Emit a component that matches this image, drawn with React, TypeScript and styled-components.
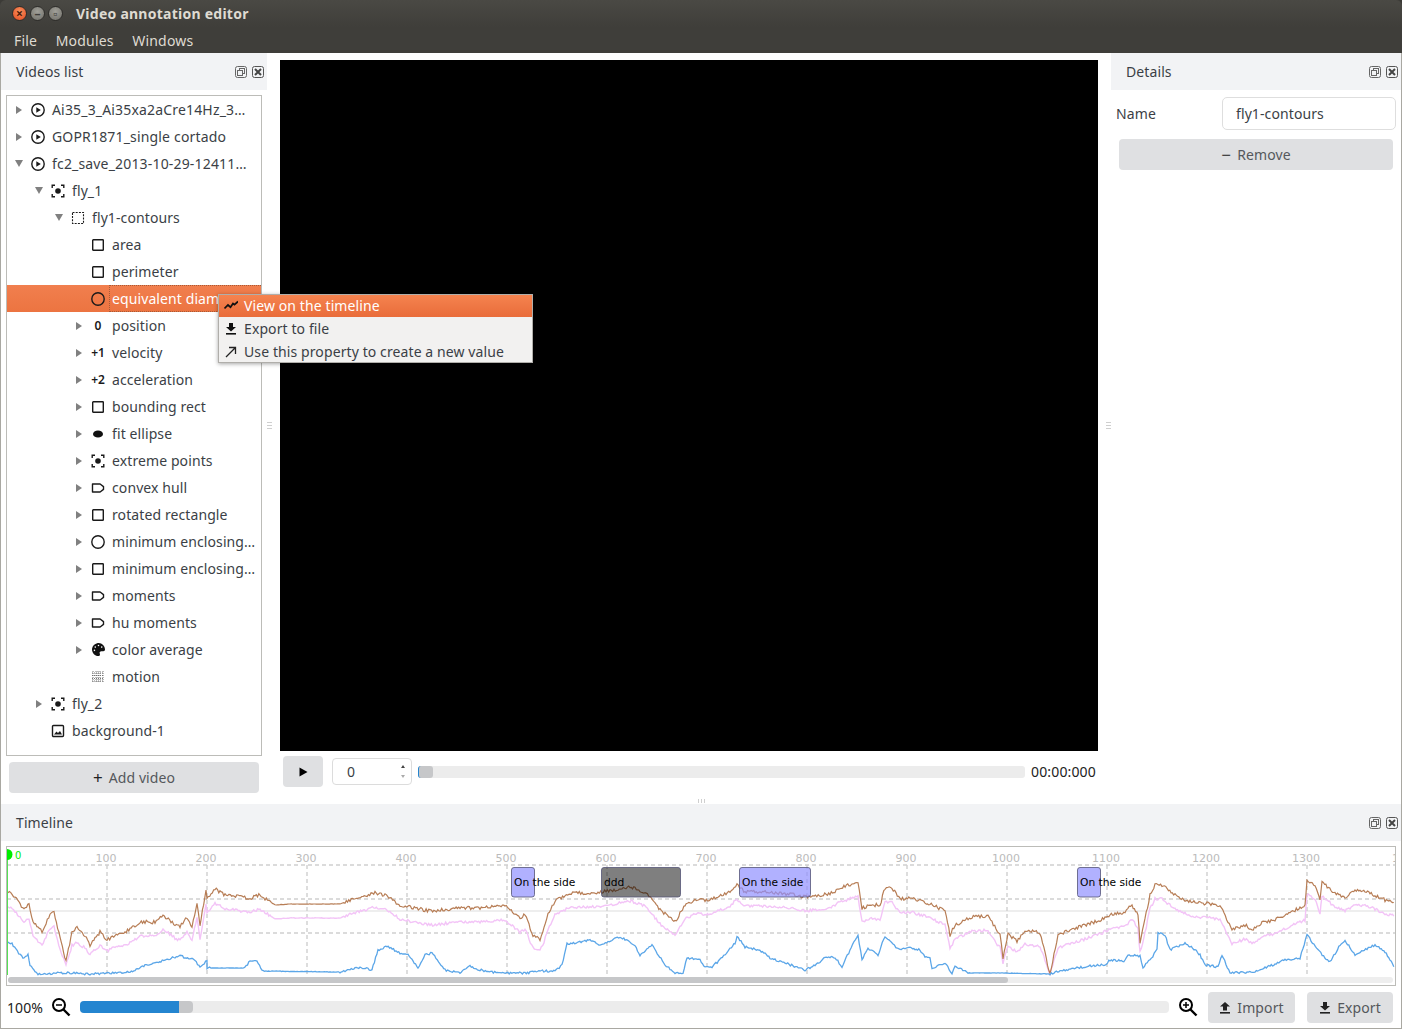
import React from 'react';
import styled, { createGlobalStyle } from 'styled-components';
import { FaPalette } from 'react-icons/fa';

type Kind =
  | 'video' | 'focus' | 'dashed' | 'square' | 'circle' | 'ellipse' | 'tag'
  | 'palette' | 'grid' | 'image' | 'n0' | 'n1' | 'n2';

type TreeRow = { label: string; level: number; kind: Kind; arrow?: 'open' | 'closed'; selected?: boolean };

const rows: TreeRow[] = [
  { label: 'Ai35_3_Ai35xa2aCre14Hz_3_Ai35xa2aCre14Hz_video', level: 0, kind: 'video', arrow: 'closed' },
  { label: 'GOPR1871_single cortado', level: 0, kind: 'video', arrow: 'closed' },
  { label: 'fc2_save_2013-10-29-124117-0000_video', level: 0, kind: 'video', arrow: 'open' },
  { label: 'fly_1', level: 1, kind: 'focus', arrow: 'open' },
  { label: 'fly1-contours', level: 2, kind: 'dashed', arrow: 'open' },
  { label: 'area', level: 3, kind: 'square' },
  { label: 'perimeter', level: 3, kind: 'square' },
  { label: 'equivalent diameter', level: 3, kind: 'circle', selected: true },
  { label: 'position', level: 3, kind: 'n0', arrow: 'closed' },
  { label: 'velocity', level: 3, kind: 'n1', arrow: 'closed' },
  { label: 'acceleration', level: 3, kind: 'n2', arrow: 'closed' },
  { label: 'bounding rect', level: 3, kind: 'square', arrow: 'closed' },
  { label: 'fit ellipse', level: 3, kind: 'ellipse', arrow: 'closed' },
  { label: 'extreme points', level: 3, kind: 'focus', arrow: 'closed' },
  { label: 'convex hull', level: 3, kind: 'tag', arrow: 'closed' },
  { label: 'rotated rectangle', level: 3, kind: 'square', arrow: 'closed' },
  { label: 'minimum enclosing circle', level: 3, kind: 'circle', arrow: 'closed' },
  { label: 'minimum enclosing triangle', level: 3, kind: 'square', arrow: 'closed' },
  { label: 'moments', level: 3, kind: 'tag', arrow: 'closed' },
  { label: 'hu moments', level: 3, kind: 'tag', arrow: 'closed' },
  { label: 'color average', level: 3, kind: 'palette', arrow: 'closed' },
  { label: 'motion', level: 3, kind: 'grid' },
  { label: 'fly_2', level: 1, kind: 'focus', arrow: 'closed' },
  { label: 'background-1', level: 1, kind: 'image' },
];

// keypoints of the traces, in page pixels
const brownPts = [
  [8,892],[15,897],[24,909],[29,904],[33,922],[42,932],[50,914],[54,912],[60,937],[66,962],[72,932],[77,928],[85,936],[90,945],[100,932],[107,940],[115,935],[125,932],[140,922],[155,922],[163,915],[175,924],[180,926],[187,918],[192,926],[197,904],[200,925],[206,890],[207,900],[215,889],[225,895],[250,898],[260,895],[275,905],[290,904],[340,904],[350,900],[375,893],[385,895],[400,905],[430,911],[460,908],[480,908],[505,906],[520,918],[525,915],[533,935],[540,940],[548,915],[555,901],[570,893],[590,893],[610,891],[630,887],[645,892],[660,910],[675,922],[685,905],[695,900],[710,900],[730,892],[737,885],[745,892],[760,892],[790,894],[805,897],[830,894],[840,888],[858,882],[862,908],[870,905],[880,905],[885,888],[892,888],[900,899],[910,898],[925,902],[930,904],[945,911],[950,935],[955,925],[972,917],[988,916],[1000,935],[1003,958],[1008,933],[1017,942],[1025,930],[1040,933],[1050,974],[1058,935],[1070,930],[1085,925],[1100,920],[1110,915],[1125,912],[1132,905],[1138,915],[1140,942],[1150,895],[1155,885],[1162,885],[1175,895],[1190,902],[1220,905],[1232,930],[1245,925],[1252,930],[1262,922],[1275,920],[1290,912],[1305,906],[1307,880],[1315,885],[1320,900],[1322,882],[1335,893],[1345,897],[1355,890],[1370,893],[1385,900],[1395,902],
];
const bluePts = [
  [8,942],[12,944],[20,955],[23,958],[28,955],[30,965],[35,972],[38,974],[60,973],[70,973],[90,974],[110,973],[130,972],[145,965],[165,960],[180,956],[195,960],[200,968],[207,960],[207,968],[245,968],[250,961],[257,961],[262,971],[340,972],[350,970],[360,967],[372,970],[378,950],[387,946],[400,953],[408,955],[418,968],[425,955],[432,953],[445,970],[460,973],[470,966],[480,970],[500,973],[525,973],[540,971],[555,971],[562,965],[567,944],[590,940],[600,945],[620,937],[635,945],[640,956],[652,945],[665,965],[675,973],[683,973],[687,958],[700,960],[705,967],[712,967],[725,955],[735,943],[737,936],[745,947],[760,950],[770,958],[785,963],[805,970],[815,965],[825,958],[835,957],[842,967],[850,950],[858,935],[862,960],[868,948],[878,955],[885,936],[893,945],[900,950],[910,948],[920,950],[925,957],[930,958],[932,968],[945,963],[952,973],[955,966],[968,973],[1000,973],[1050,974],[1060,971],[1090,966],[1105,965],[1110,960],[1125,961],[1128,955],[1140,956],[1143,967],[1150,960],[1157,950],[1158,933],[1165,935],[1170,950],[1185,943],[1195,950],[1200,955],[1205,965],[1218,967],[1222,955],[1230,973],[1255,972],[1270,966],[1285,960],[1300,958],[1307,935],[1318,950],[1325,958],[1330,962],[1340,945],[1345,940],[1355,955],[1375,945],[1385,952],[1395,968],
];

const noise = (x: number) => {
  const v = Math.sin(x * 12.9898) * 43758.5453;
  return (v - Math.floor(v)) * 2 - 1;
};

const resample = (pts: number[][], amp: number, quiet: number[][], map: (y: number) => number = (y) => y) => {
  const out: string[] = [];
  for (let i = 0; i < pts.length - 1; i++) {
    const [x0, y0] = pts[i];
    const [x1, y1] = pts[i + 1];
    const steps = Math.max(1, Math.round((x1 - x0) / 1.3));
    for (let s = 0; s < steps; s++) {
      const x = x0 + ((x1 - x0) * s) / steps;
      const y = y0 + ((y1 - y0) * s) / steps;
      const calm = quiet.some(([a, b]) => x > a && x < b);
      const j = noise(x + amp) * (calm ? 0.25 : amp);
      out.push(`${x.toFixed(1)},${Math.min(975, map(y) + j).toFixed(1)}`);
    }
  }
  return out.join(' ');
};

const pinkOffset = (y: number) => y + (y < 930 ? 14 : (14 * (974 - y)) / 44);

const brownLine = resample(brownPts, 1.7, [[270, 345]]);
const pinkLine = resample(brownPts, 1.4, [[270, 345]], pinkOffset);
const blueLine = resample(bluePts, 1.1, [[210, 245], [265, 340], [968, 1050]]);

const events = [
  { x: 511, w: 23, label: 'On the side', fill: '#9090ff', alpha: 0.7 },
  { x: 601, w: 79, label: 'ddd', fill: '#000000', alpha: 0.5 },
  { x: 739, w: 71, label: 'On the side', fill: '#9090ff', alpha: 0.7 },
  { x: 1077, w: 23, label: 'On the side', fill: '#9090ff', alpha: 0.7 },
];

function TreeIcon({ kind }: { kind: Kind }) {
  if (kind === 'n0') return <Glyph>0</Glyph>;
  if (kind === 'n1') return <Glyph>+1</Glyph>;
  if (kind === 'n2') return <Glyph>+2</Glyph>;
  if (kind === 'palette') return <FaPalette size={13} color="#111" />;
  return (
    <svg width="14" height="14" viewBox="0 0 14 14" fill="none" stroke="#1a1a1a" strokeWidth="1.4">
      {kind === 'video' && (
        <>
          <circle cx="7" cy="7" r="6.2" />
          <path d="M5.3 4.2 9.8 7l-4.5 2.8z" fill="#1a1a1a" stroke="none" />
        </>
      )}
      {kind === 'focus' && (
        <>
          <path d="M1.2 4V1.2H4M10 1.2h2.8V4M1.2 10v2.8H4M10 12.8h2.8V10" />
          <circle cx="7" cy="7" r="2.8" fill="#1a1a1a" stroke="none" />
        </>
      )}
      {kind === 'dashed' && <rect x="1.5" y="1.5" width="11" height="11" strokeWidth="1.1" strokeDasharray="2 1.2" />}
      {kind === 'square' && <rect x="1.7" y="1.7" width="10.6" height="10.6" rx="0.6" />}
      {kind === 'circle' && <circle cx="7" cy="7" r="6.2" />}
      {kind === 'ellipse' && <ellipse cx="7" cy="7" rx="5" ry="3.6" fill="#111" stroke="none" />}
      {kind === 'tag' && <path d="M1.5 3h7.6l3.4 2.6v2.8L9.1 11H1.5z" strokeLinejoin="round" />}
      {kind === 'grid' && (
        <g stroke="#666" strokeWidth="0.9" strokeDasharray="1 1">
          <path d="M2 1v12M5 1v12M7 1v12M9 1v12M12 1v12" />
          <path d="M1 3h12M1 5.5h12M1 8.5h12M1 11h12" />
        </g>
      )}
      {kind === 'image' && (
        <>
          <rect x="1.5" y="1.5" width="11" height="11" rx="1" />
          <path d="M3 10.5 5.5 7.5 7 9l2-2 2 3.5z" fill="#1a1a1a" stroke="none" />
        </>
      )}
    </svg>
  );
}

const FloatIcon = () => (
  <svg width="12" height="12" viewBox="0 0 12 12" fill="none" stroke="#666" strokeWidth="1">
    <rect x="0.5" y="0.5" width="11" height="11" rx="2" />
    <rect x="4.5" y="2.5" width="5" height="5" />
    <rect x="2.5" y="4.5" width="5" height="5" fill="#f2f3f5" />
  </svg>
);

const CloseIcon = () => (
  <svg width="12" height="12" viewBox="0 0 12 12" fill="none" stroke="#555">
    <rect x="0.5" y="0.5" width="11" height="11" rx="2" />
    <path d="M3 3l6 6M9 3l-6 6" strokeWidth="2" stroke="#444" />
  </svg>
);

const DownloadIcon = ({ color = '#222' }: { color?: string }) => (
  <svg width="12" height="13" viewBox="0 0 12 13" fill={color}>
    <path d="M4 1h4v4h3L6 9.5 1 5h3z" />
    <rect x="1" y="11" width="10" height="1.6" />
  </svg>
);

const UploadIcon = () => (
  <svg width="12" height="13" viewBox="0 0 12 13" fill="#222">
    <path d="M4 9.5h4v-4h3L6 1 1 5.5h3z" />
    <rect x="1" y="11" width="10" height="1.6" />
  </svg>
);

const ZoomIcon = ({ plus }: { plus?: boolean }) => (
  <svg width="20" height="20" viewBox="0 0 20 20" fill="none" stroke="#000" strokeWidth="2">
    <circle cx="8" cy="8" r="6" />
    <path d="M12.5 12.5 18.5 18.5" strokeWidth="2.4" />
    <path d="M5 8h6" strokeWidth="1.5" />
    {plus && <path d="M8 5v6" strokeWidth="1.5" />}
  </svg>
);

function DockHeader({ title }: { title: string }) {
  return (
    <Header>
      <span>{title}</span>
      <HeaderTools>
        <FloatIcon />
        <CloseIcon />
      </HeaderTools>
    </Header>
  );
}

function Chart() {
  const ticks = Array.from({ length: 14 }, (_, i) => i + 1);
  return (
    <ChartSvg viewBox="7 847 1388 130">
      {ticks.map((t) => (
        <PlotLabel key={t} x={7 + t * 100 - 1} y={862} textAnchor="middle">
          {t * 100}
        </PlotLabel>
      ))}
      <line x1="7" x2="1395" y1="911" y2="911" stroke="#eeeeee" strokeWidth="2" />
      <g stroke="#cfcfcf" strokeWidth="1.4" strokeDasharray="4 3">
        {[865, 899, 933].map((y) => (
          <line key={y} x1="7" x2="1395" y1={y} y2={y} />
        ))}
        {ticks.slice(0, 13).map((t) => (
          <line key={t} x1={7 + t * 100} x2={7 + t * 100} y1="865" y2="975" />
        ))}
      </g>
      <polyline points={pinkLine} fill="none" stroke="#f3c4f7" strokeWidth="1.4" />
      <polyline points={brownLine} fill="none" stroke="#b77d55" strokeWidth="1.2" />
      <polyline points={blueLine} fill="none" stroke="#5ba6e8" strokeWidth="1.3" />
      {events.map((e) => (
        <g key={e.x}>
          <rect x={e.x + 0.5} y="867.5" width={e.w} height="29.5" rx="2.5" fill={e.fill} fillOpacity={e.alpha} stroke="#555577" strokeOpacity="0.8" />
          <EventLabel x={e.x + 3} y="886">{e.label}</EventLabel>
        </g>
      ))}
      <line x1="7.5" x2="7.5" y1="850" y2="975" stroke="#55e055" strokeWidth="1" />
      <path d="M7 849a5.5 5.5 0 0 1 0 11z" fill="#00ee00" />
      <ZeroLabel x="15" y="859">0</ZeroLabel>
    </ChartSvg>
  );
}

export default function App() {
  return (
    <Page>
      <GlobalStyle />
      <TitleBar>
        <WindowButtons>
          <WindowButton $kind="close">×</WindowButton>
          <WindowButton $kind="other">–</WindowButton>
          <WindowButton $kind="other">▫</WindowButton>
        </WindowButtons>
        <WindowTitle>Video annotation editor</WindowTitle>
      </TitleBar>
      <MenuBar>
        <MenuEntry>File</MenuEntry>
        <MenuEntry>Modules</MenuEntry>
        <MenuEntry>Windows</MenuEntry>
      </MenuBar>
      <Content>
        <Workspace>
          <LeftDock>
            <DockHeader title="Videos list" />
            <Tree>
              {rows.map((row) => (
                <Row key={row.label} $level={row.level} $selected={row.selected}>
                  <Arrow $state={row.arrow} />
                  <IconSlot>
                    <TreeIcon kind={row.kind} />
                  </IconSlot>
                  <RowLabel $selected={row.selected} $wide={row.level === 0}>{row.label}</RowLabel>
                </Row>
              ))}
            </Tree>
            <WideButton $inset={8}>
              <ButtonGlyph>+</ButtonGlyph> Add video
            </WideButton>
            <ContextMenu>
              <MenuItem $active>
                <MenuIcon>
                  <svg width="14" height="12" viewBox="0 0 14 12" fill="none" stroke="#111" strokeWidth="1.7">
                    <path d="M0.5 9.5 4 6l2.5 2.2L9 4.5l1.5 1.2L14 2.5" />
                  </svg>
                </MenuIcon>
                View on the timeline
              </MenuItem>
              <MenuItem>
                <MenuIcon>
                  <DownloadIcon color="#111" />
                </MenuIcon>
                Export to file
              </MenuItem>
              <MenuItem>
                <MenuIcon>
                  <svg width="12" height="12" viewBox="0 0 12 12" fill="none" stroke="#222" strokeWidth="1.3">
                    <path d="M1 11 10.5 1.5M4 1.5h6.5V8" />
                  </svg>
                </MenuIcon>
                Use this property to create a new value
              </MenuItem>
            </ContextMenu>
          </LeftDock>
          <VSplit $side="flex-start">
            <Grip />
          </VSplit>
          <Player>
            <Video />
            <Controls>
              <PlayButton>
                <svg width="9" height="10" viewBox="0 0 9 10" fill="#000">
                  <path d="M0.5 0.5 8.5 5l-8 4.5z" />
                </svg>
              </PlayButton>
              <Spinner>
                0
                <SpinArrows>
                  <SpinArrow $up />
                  <SpinArrow />
                </SpinArrows>
              </Spinner>
              <SeekTrack>
                <SeekThumb />
              </SeekTrack>
              <TimeText>00:00:000</TimeText>
            </Controls>
          </Player>
          <VSplit $side="flex-end">
            <Grip />
          </VSplit>
          <RightDock>
            <DockHeader title="Details" />
            <NameRow>
              <NameLabel>Name</NameLabel>
              <NameInput>fly1-contours</NameInput>
            </NameRow>
            <RemoveButton>
              <ButtonGlyph>−</ButtonGlyph> Remove
            </RemoveButton>
          </RightDock>
        </Workspace>
        <HSplit>
          <HGrip />
        </HSplit>
        <Timeline>
          <DockHeader title="Timeline" />
          <ChartBox>
            <Chart />
            <ScrollTrack>
              <ScrollThumb />
            </ScrollTrack>
          </ChartBox>
          <Footer>
            <ZoomText>100%</ZoomText>
            <ZoomIcon />
            <ZoomTrack>
              <ZoomFill />
              <ZoomThumb />
            </ZoomTrack>
            <ZoomIcon plus />
            <FooterButton $width={87} $gap={10}>
              <UploadIcon /> Import
            </FooterButton>
            <FooterButton $width={86} $gap={12}>
              <DownloadIcon /> Export
            </FooterButton>
          </Footer>
        </Timeline>
      </Content>
    </Page>
  );
}

const GlobalStyle = createGlobalStyle`
  html, body { margin: 0; padding: 0; background: #fff; }
  * { box-sizing: border-box; }
`;

const Page = styled.div`
  width: 1402px;
  height: 1029px;
  display: flex;
  flex-direction: column;
  overflow: hidden;
  background: #3c3b37;
  color: #3b3f46;
  font-family: 'Noto Sans', 'Open Sans', sans-serif;
  font-size: 14px;
  letter-spacing: 0.1px;
`;

const TitleBar = styled.div`
  height: 27px;
  flex: none;
  display: flex;
  align-items: center;
  padding-left: 12px;
  background: linear-gradient(#4a4944, #3f3e3a);
  border-radius: 6px 6px 0 0;
`;

const WindowButtons = styled.div`
  display: flex;
  gap: 3px;
  width: 64px;
`;

const WindowButton = styled.div<{ $kind: 'close' | 'other' }>`
  width: 15px;
  height: 15px;
  border-radius: 50%;
  display: flex;
  align-items: center;
  justify-content: center;
  font-size: 12px;
  font-weight: 700;
  line-height: 1;
  letter-spacing: 0;
  color: ${(p) => (p.$kind === 'close' ? '#4a1c0a' : '#3f3e3a')};
  border: 1px solid #2e2d2a;
  background: ${(p) =>
    p.$kind === 'close'
      ? 'radial-gradient(circle at 50% 35%, #f8925f, #e4491f)'
      : 'radial-gradient(circle at 50% 35%, #a09f98, #706f69)'};
`;

const WindowTitle = styled.div`
  color: #dfdbd2;
  font-weight: 700;
  font-size: 14px;
  letter-spacing: 0.25px;
`;

const MenuBar = styled.div`
  height: 26px;
  flex: none;
  display: flex;
  align-items: center;
  gap: 18.5px;
  padding: 0 0 0 14px;
  background: #3f3e3a;
`;

const MenuEntry = styled.div`
  color: #dfdbd2;
  letter-spacing: 0.2px;
`;

const Content = styled.div`
  flex: 1;
  display: flex;
  flex-direction: column;
  background: #fff;
  border: 1px solid #a9a8a2;
  border-top: none;
`;

const Workspace = styled.div`
  height: 744px;
  flex: none;
  display: flex;
`;

const LeftDock = styled.div`
  position: relative;
  width: 266px;
  flex: none;
  display: flex;
  flex-direction: column;
`;

const Header = styled.div`
  height: 37px;
  flex: none;
  display: flex;
  align-items: center;
  justify-content: space-between;
  padding: 0 3px 0 15px;
  background: #f2f3f5;
`;

const HeaderTools = styled.div`
  display: flex;
  gap: 5px;
`;

const Tree = styled.div`
  margin: 5px 5px 0 5px;
  height: 661px;
  flex: none;
  border: 1px solid #bcbcb8;
  background: #fff;
  overflow: hidden;
`;

const Row = styled.div<{ $level: number; $selected?: boolean }>`
  height: 27px;
  display: flex;
  align-items: center;
  padding-left: ${(p) => 6 + p.$level * 20}px;
  background: ${(p) => (p.$selected ? 'linear-gradient(#f17f4e, #ec7441)' : 'transparent')};
  color: ${(p) => (p.$selected ? '#fff' : 'inherit')};
`;

const Arrow = styled.span<{ $state?: 'open' | 'closed' }>`
  width: 12px;
  flex: none;
  display: flex;
  justify-content: center;
  &::before {
    content: '';
    display: ${(p) => (p.$state ? 'block' : 'none')};
    border-style: solid;
    border-color: transparent;
    ${(p) =>
      p.$state === 'open'
        ? 'border-width: 7px 4px 0 4px; border-top-color: #808080;'
        : 'border-width: 4px 0 4px 6px; border-left-color: #808080;'}
  }
`;

const IconSlot = styled.span`
  width: 16px;
  margin-left: 5px;
  flex: none;
  display: flex;
  align-items: center;
  justify-content: center;
`;

const Glyph = styled.span`
  font-size: 12px;
  font-weight: 600;
  letter-spacing: 0;
  color: #1a1a1a;
  white-space: nowrap;
`;

const RowLabel = styled.span<{ $selected?: boolean; $wide?: boolean }>`
  flex: 1;
  min-width: 0;
  margin-left: 3px;
  padding: 0 ${(p) => (p.$wide ? 10 : 4)}px 0 2px;
  line-height: 25px;
  letter-spacing: ${(p) => (p.$wide ? 0.17 : 0.1)}px;
  white-space: nowrap;
  overflow: hidden;
  text-overflow: ellipsis;
  border: 1px dotted ${(p) => (p.$selected ? '#a85a36' : 'transparent')};
  border-width: 1px 0 1px 1px;
`;

const WideButton = styled.div<{ $inset: number }>`
  height: 31px;
  margin: 6px ${(p) => p.$inset}px 0 ${(p) => p.$inset}px;
  flex: none;
  display: flex;
  align-items: center;
  justify-content: center;
  gap: 6px;
  border-radius: 4px;
  background: #dfe0e2;
  color: #55585c;
`;

const ButtonGlyph = styled.span`
  color: #222;
  font-size: 17px;
  line-height: 1;
`;

const ContextMenu = styled.div`
  position: absolute;
  left: 217px;
  top: 241px;
  width: 315px;
  height: 69px;
  display: flex;
  flex-direction: column;
  background: #f2f1f0;
  border: 1px solid #b0aeaa;
  box-shadow: 0 1px 4px rgba(0, 0, 0, 0.35);
  z-index: 5;
`;

const MenuItem = styled.div<{ $active?: boolean }>`
  height: ${(p) => (p.$active ? 22 : 23)}px;
  flex: none;
  display: flex;
  align-items: center;
  padding-left: 4px;
  padding-bottom: ${(p) => (p.$active ? 2 : 0)}px;
  white-space: nowrap;
  letter-spacing: 0.1px;
  background: ${(p) => (p.$active ? 'linear-gradient(#f5834f, #e96c3a)' : 'transparent')};
  color: ${(p) => (p.$active ? '#fff' : 'inherit')};
`;

const MenuIcon = styled.span`
  width: 16px;
  margin-right: 5px;
  flex: none;
  display: flex;
  justify-content: center;
`;

const VSplit = styled.div<{ $side: string }>`
  width: 13px;
  flex: none;
  display: flex;
  align-items: center;
  justify-content: ${(p) => p.$side};
`;

const Grip = styled.div`
  width: 5px;
  height: 7px;
  background: repeating-linear-gradient(#cfcfcf 0 1px, transparent 1px 3px);
`;

const Player = styled.div`
  width: 818px;
  flex: none;
  display: flex;
  flex-direction: column;
  padding-top: 7px;
`;

const Video = styled.div`
  height: 691px;
  flex: none;
  background: #000;
`;

const Controls = styled.div`
  height: 31px;
  margin-top: 5px;
  flex: none;
  display: flex;
  align-items: center;
  padding: 0 2px 0 3px;
`;

const PlayButton = styled.div`
  width: 40px;
  height: 31px;
  flex: none;
  display: flex;
  align-items: center;
  justify-content: center;
  border-radius: 4px;
  background: #dfe0e2;
`;

const Spinner = styled.div`
  width: 80px;
  height: 27px;
  margin-left: 9px;
  flex: none;
  display: flex;
  align-items: center;
  justify-content: space-between;
  padding: 0 6px 0 14px;
  border: 1px solid #dcdcdc;
  border-radius: 4px;
`;

const SpinArrows = styled.div`
  display: flex;
  flex-direction: column;
  gap: 7px;
`;

const SpinArrow = styled.span<{ $up?: boolean }>`
  width: 0;
  height: 0;
  border-style: solid;
  border-color: transparent;
  ${(p) =>
    p.$up
      ? 'border-width: 0 2px 3px 2px; border-bottom-color: #444;'
      : 'border-width: 3px 2px 0 2px; border-top-color: #aaa;'}
`;

const SeekTrack = styled.div`
  flex: 1;
  height: 12px;
  margin: 0 6px;
  border-radius: 3px;
  background: #ececec;
`;

const SeekThumb = styled.div`
  width: 15px;
  height: 12px;
  border-radius: 3px;
  border-left: 1px solid #2485d0;
  background: #c6c7c9;
`;

const TimeText = styled.div`
  width: 65px;
  flex: none;
  color: #222;
  white-space: nowrap;
  letter-spacing: 0.15px;
`;

const RightDock = styled.div`
  flex: 1;
  min-width: 0;
  display: flex;
  flex-direction: column;
`;

const NameRow = styled.div`
  height: 33px;
  margin-top: 7px;
  flex: none;
  display: flex;
  align-items: center;
  justify-content: space-between;
  padding: 0 5px;
`;

const NameLabel = styled.div``;

const NameInput = styled.div`
  width: 174px;
  height: 33px;
  display: flex;
  align-items: center;
  padding-left: 13px;
  border: 1px solid #dedede;
  border-radius: 5px;
`;

const RemoveButton = styled(WideButton).attrs({ $inset: 8 })`
  margin-top: 9px;
`;

const HSplit = styled.div`
  height: 7px;
  flex: none;
  display: flex;
  align-items: center;
  justify-content: center;
`;

const HGrip = styled.div`
  width: 7px;
  height: 4px;
  background: repeating-linear-gradient(90deg, #cfcfcf 0 1px, transparent 1px 3px);
`;

const Timeline = styled.div`
  flex: 1;
  min-height: 0;
  display: flex;
  flex-direction: column;
`;

const ChartBox = styled.div`
  height: 140px;
  margin: 5px 5px 0 5px;
  flex: none;
  display: flex;
  flex-direction: column;
  border: 1px solid #bcbcb8;
`;

const ChartSvg = styled.svg`
  width: 100%;
  height: 130px;
  flex: none;
  display: block;
`;

const PlotLabel = styled.text`
  font-family: 'DejaVu Sans', sans-serif;
  font-size: 11px;
  letter-spacing: 0;
  fill: #bbbbbb;
`;

const EventLabel = styled.text`
  font-family: 'DejaVu Sans', sans-serif;
  font-size: 10.7px;
  letter-spacing: 0;
  fill: #000;
`;

const ZeroLabel = styled.text`
  font-family: 'DejaVu Sans', sans-serif;
  font-size: 10px;
  fill: #00ee00;
`;

const ScrollTrack = styled.div`
  height: 6px;
  margin: 0 2px 0 1px;
  flex: none;
  border-radius: 3px;
  background: #eeeeee;
`;

const ScrollThumb = styled.div`
  width: 1000px;
  height: 6px;
  border-radius: 3px;
  background: #c6c7c9;
`;

const Footer = styled.div`
  flex: 1;
  min-height: 0;
  display: flex;
  align-items: center;
  padding: 0 8px 0 6px;
`;

const ZoomText = styled.div`
  width: 44px;
  flex: none;
  color: #222;
`;

const ZoomTrack = styled.div`
  flex: 1;
  height: 12px;
  margin: 0 9px;
  display: flex;
  border-radius: 4px;
  background: #ececec;
`;

const ZoomFill = styled.div`
  width: 99px;
  border-radius: 4px 0 0 4px;
  background: #2485d0;
`;

const ZoomThumb = styled.div`
  width: 14px;
  border-radius: 0 4px 4px 0;
  background: #c6c7c9;
`;

const FooterButton = styled.div<{ $width: number; $gap: number }>`
  width: ${(p) => p.$width}px;
  height: 31px;
  margin-left: ${(p) => p.$gap}px;
  flex: none;
  display: flex;
  align-items: center;
  justify-content: center;
  gap: 6px;
  border-radius: 4px;
  background: #dfe0e2;
  color: #55585c;
`;
